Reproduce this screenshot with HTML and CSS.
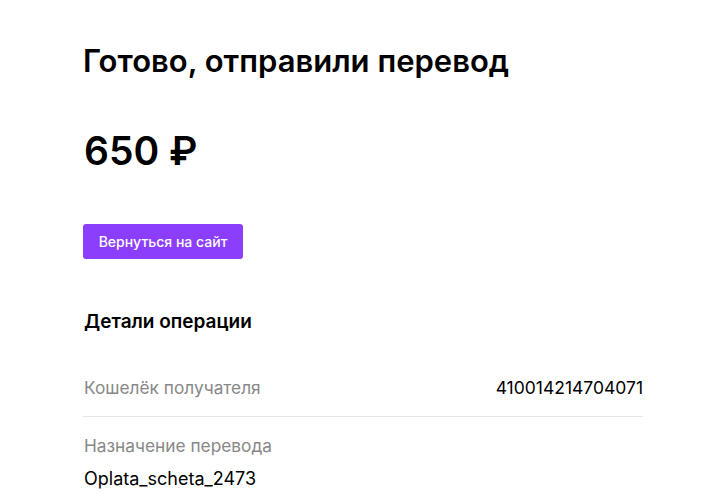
FILE: index.html
```html
<!DOCTYPE html>
<html lang="ru">
<head>
<meta charset="utf-8">
<link rel="stylesheet" href="styles.css">
</head>
<body>
<main class="page">
  <h1 class="title">Готово, отправили перевод</h1>
  <div class="amount">650 ₽</div>
  <a class="btn" href="#">Вернуться на сайт</a>
  <h2 class="subtitle">Детали операции</h2>
  <div class="row">
    <span class="label">Кошелёк получателя</span>
    <span class="value">410014214704071</span>
  </div>
  <div class="block">
    <div class="label">Назначение перевода</div>
    <div class="value">Oplata_scheta_2473</div>
  </div>
</main>
</body>
</html>
```
FILE: styles.css
```css
* { box-sizing: border-box; }
body {
  margin: 0;
  background: #fff;
  font-family: Inter, "Noto Sans", sans-serif;
  color: #000;
}
.page {
  width: 560px;
  margin-left: 83px;
  padding-top: 39px;
  display: flex;
  flex-direction: column;
  align-items: flex-start;
}
.title {
  margin: 0;
  font-size: 31px;
  font-weight: 600;
  line-height: 44px;
}
.amount {
  margin-top: 44px;
  font-size: 39px;
  font-weight: 600;
  line-height: 48px;
  padding-left: 1px;
}
.btn {
  margin-top: 49px;
  height: 35px;
  width: 160px;
  background: #8b3ffd;
  color: #fff;
  border-radius: 3px;
  text-decoration: none;
  font-size: 14px;
  font-weight: 500;
  display: flex;
  align-items: center;
  justify-content: center;
}
.subtitle {
  margin: 51px 0 0;
  font-size: 19px;
  font-weight: 600;
  line-height: 24px;
  padding-left: 1px;
}
.row {
  margin-top: 42px;
  width: 100%;
  display: flex;
  justify-content: space-between;
  align-items: baseline;
  padding-bottom: 16px;
  padding-left: 1px;
  border-bottom: 1px solid #e6e6e6;
}
.label {
  font-size: 17.3px;
  color: #888;
  line-height: 24px;
}
.value {
  font-size: 17.5px;
  line-height: 24px;
}
.block {
  margin-top: 17px;
  width: 100%;
  padding-left: 1px;
  display: flex;
  flex-direction: column;
  gap: 9px;
}
.block .value {
  font-size: 18px;
}
```
